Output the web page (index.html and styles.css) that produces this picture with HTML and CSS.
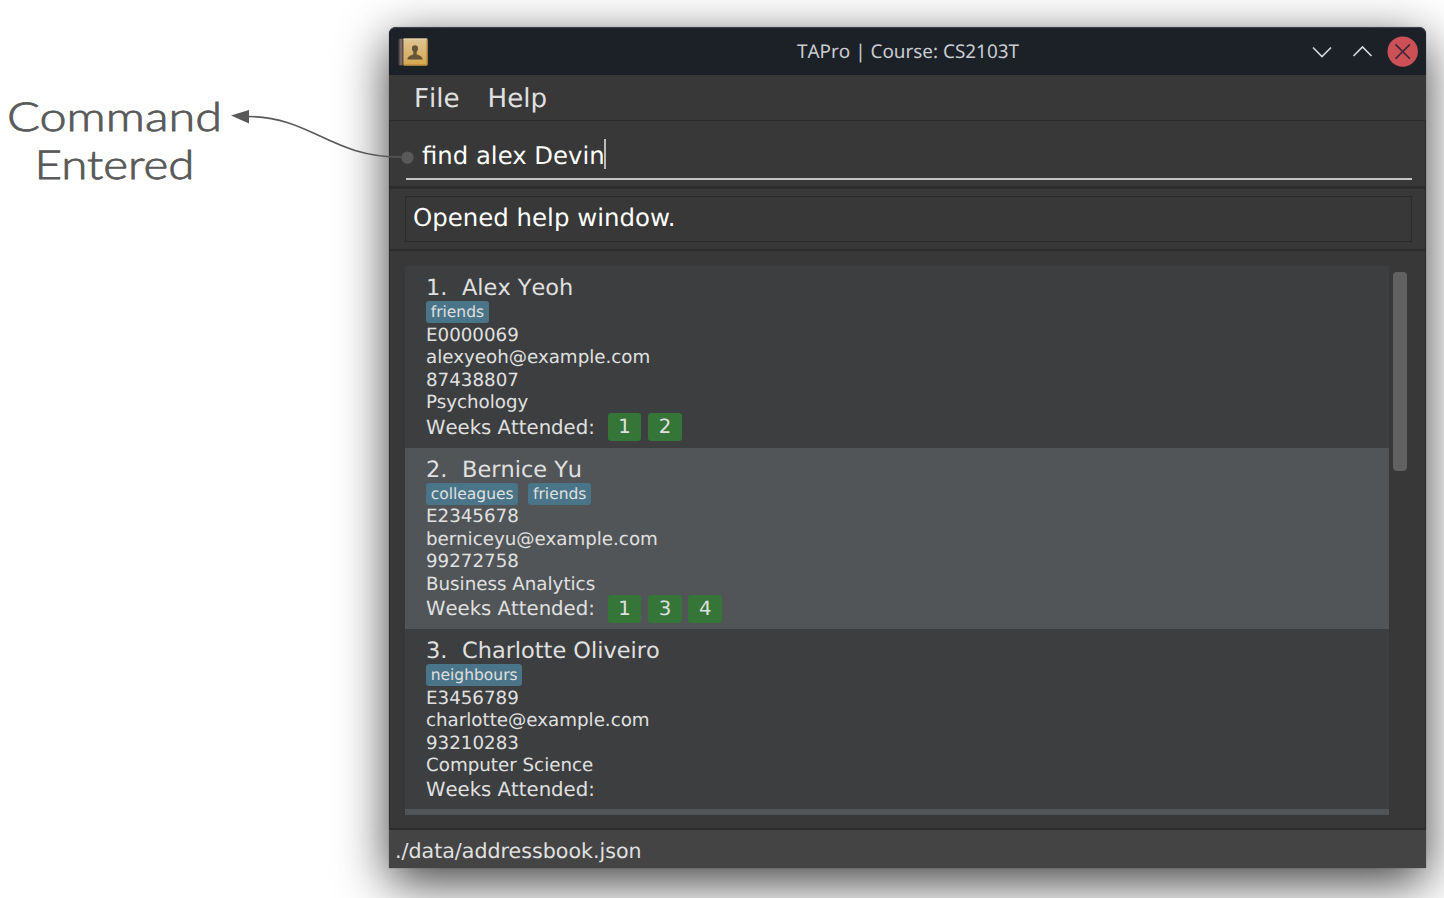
FILE: index.html
```html
<!DOCTYPE html>
<html lang="en">
<head>
<meta charset="utf-8">
<title>TAPro</title>
<link rel="stylesheet" href="styles.css">
</head>
<body>
<main class="stage">
  <svg class="note" width="389" height="110" viewBox="0 90 389 110">
    <text x="7" y="131" textLength="215" lengthAdjust="spacingAndGlyphs">Command</text>
    <text x="34.500" y="179" textLength="160" lengthAdjust="spacingAndGlyphs">Entered</text>
  </svg>
  <section class="window">
    <header class="titlebar">
      <svg class="app-icon" width="30" height="28" viewBox="0 0 30 28">
        <defs><linearGradient id="cover" x1="0" y1="0" x2="0" y2="1"><stop offset="0" stop-color="#dcc594"/><stop offset="1" stop-color="#d5a64c"/></linearGradient></defs>
        <rect x=".5" y=".5" width="29" height="27" rx="1.5" fill="#5c4b48"/>
        <rect x="2" y="1" width="2" height="26" fill="#786765"/>
        <rect x="5.500" y=".5" width="24" height="27" rx="1" fill="url(#cover)"/>
        <path d="M5.500 1.200H29" stroke="#e9d7ae"/><path d="M29 1v26H6" fill="none" stroke="#b18432"/>
        <path d="M17 7.200c-2.200 0-3.200 1.500-3.100 3.400.1 1.600.7 2.500 1.500 3.400v2.100c-.3 1.300-5.700 1.200-6 5.300h15.200c-.3-4.100-5.700-4-6-5.300V14c.8-.9 1.400-1.800 1.500-3.400.1-1.900-.9-3.400-3.100-3.400z" fill="#65533a"/>
      </svg>
      <h1 class="title">TAPro | Course: CS2103T</h1>
      <svg class="controls" width="110" height="34" viewBox="1310 34 110 34" fill="none">
        <path d="M1313 46.500l9 9 9-9M1353.500 55l9-9 9 9" stroke="#d5d8dc" stroke-width="1.600"/>
        <circle cx="1402.700" cy="50.600" r="15.200" fill="#cb5057"/>
        <path d="M1395.500 43.400l14.400 14.400M1409.900 43.400l-14.400 14.400" stroke="#3b2731" stroke-width="1.600"/>
      </svg>
    </header>
    <nav class="menubar"><span>File</span><span>Help</span></nav>
    <div class="command"><div class="command-field">find alex Devin<i class="caret"></i></div></div>
    <div class="result"><div class="result-box">Opened help window.</div></div>
    <div class="list-pane">
      <div class="list">
        <article class="person">
          <h2><span class="num">1.</span>Alex Yeoh</h2>
          <div class="tags"><span>friends</span></div>
          <p>E0000069</p><p>alexyeoh@example.com</p><p>87438807</p><p>Psychology</p>
          <div class="weeks">Weeks Attended:<b>1</b><b>2</b></div>
        </article>
        <article class="person alt">
          <h2><span class="num">2.</span>Bernice Yu</h2>
          <div class="tags"><span>colleagues</span><span>friends</span></div>
          <p>E2345678</p><p>berniceyu@example.com</p><p>99272758</p><p>Business Analytics</p>
          <div class="weeks">Weeks Attended:<b>1</b><b>3</b><b>4</b></div>
        </article>
        <article class="person short">
          <h2><span class="num">3.</span>Charlotte Oliveiro</h2>
          <div class="tags"><span>neighbours</span></div>
          <p>E3456789</p><p>charlotte@example.com</p><p>93210283</p><p>Computer Science</p>
          <div class="weeks">Weeks Attended:</div>
        </article>
        <article class="person alt"></article>
      </div>
      <div class="scrollbar"><div class="thumb"></div></div>
    </div>
    <footer class="status">./data/addressbook.json</footer>
  </section>
  <svg class="arrow" width="190" height="60" viewBox="225 105 190 60">
    <path d="M248 116.500C312 117 330 157 401 157" fill="none" stroke="#595959" stroke-width="1.600"/>
    <path d="M231 115.600l18-5.600v13.400z" fill="#595959"/>
    <circle cx="407.500" cy="157.700" r="6.200" fill="#595959"/>
  </svg>
</main>
</body>
</html>
```

FILE: styles.css
```css
* { box-sizing: border-box; }
body {
  margin: 0;
  background: #fff;
  font-family: "DejaVu Sans", sans-serif;
  color: #e0e0e0;
  text-rendering: geometricPrecision;
}
h1, h2, p { margin: 0; font-weight: 400; }
.stage {
  position: relative;
  display: flex;
  align-items: flex-start;
  width: 1444px;
  height: 898px;
  overflow: hidden;
}
.note { flex: none; margin-top: 90px; }
.note text {
  font: 300 40px Lato, sans-serif;
  fill: #595959;
  stroke: #595959;
  stroke-width: .8px;
}
.arrow { position: absolute; left: 225px; top: 105px; }
.window {
  display: flex;
  flex-direction: column;
  flex: none;
  width: 1037px;
  height: 841px;
  margin-top: 27px;
  border-radius: 7px 7px 0 0;
  background: #383838;
  box-shadow: 0 14px 50px rgba(0, 0, 0, .76), 0 0 1px #555;
}
.titlebar {
  display: grid;
  grid-template-columns: 110px 1fr 110px;
  align-items: center;
  height: 48px;
  padding: 0 6px 0 9px;
  border-top: 1px solid #41464d;
  border-radius: 7px 7px 0 0;
  background: #1c2027;
}
.title {
  padding: 0 2px 2px 0;
  text-align: center;
  font: 18.9px/26px "Noto Sans", sans-serif;
  font-kerning: none;
  color: #c9ccd1;
}
.menubar {
  display: flex;
  gap: 28px;
  height: 45px;
  padding-left: 25px;
  font-size: 26.1px;
  font-kerning: none;
  line-height: 49px;
}
.command {
  height: 68px;
  padding: 9px 13px 0 16px;
  border: 1px solid #2c2c2c;
  border-bottom-width: 2px;
}
.command-field {
  display: flex;
  align-items: center;
  height: 50px;
  padding: 3px 0 0 16px;
  border-bottom: 2px solid #c5c5c5;
  font-size: 24.35px;
  color: #fff;
}
.caret { width: 2px; height: 30px; margin: -4px 0 0 -1px; background: #bbb; }
.result {
  height: 63px;
  padding: 7px 13px 0 15px;
  border: solid #2c2c2c;
  border-width: 1px 1px 2px;
}
.result-box {
  height: 46px;
  padding-left: 7px;
  border: 1px solid #2b2b2b;
  font-size: 24.45px;
  line-height: 42px;
  color: #fff;
}
.list-pane {
  display: flex;
  gap: 4px;
  height: 579px;
  padding: 15px 18px 12px 15px;
  border: 1px solid #2c2c2c;
  border-top: 0;
  border-bottom-width: 2px;
}
.list { width: 984px; height: 549px; overflow: hidden; }
.person {
  height: 181.5px;
  padding: 8px 0 0 21px;
  background: #3c3e3f;
}
.person.short { height: 179.5px; }
.person.alt { background: #515557; }
.person h2 { padding-top: 1px; font-size: 22.45px; line-height: 26px; font-kerning: none; }
.num { display: inline-block; width: 36px; }
.tags { display: flex; gap: 10px; height: 23.8px; font-size: 15.5px; line-height: 22px; }
.tags span { height: 22px; padding: 0 4.7px; border-radius: 3px; background: #4a7488; }
.person p { font-size: 18.25px; line-height: 22.5px; }
.weeks { display: flex; align-items: center; height: 25px; font-size: 19.7px; font-kerning: none; }
.short .weeks { height: 24px; }
.weeks b {
  width: 33.5px;
  height: 28px;
  margin-left: 6.8px;
  border-radius: 3px;
  background: #357538;
  font-weight: 400;
  line-height: 28px;
  text-align: center;
}
.weeks b:first-of-type { margin-left: 13px; }
.scrollbar { width: 14px; padding-top: 6px; }
.thumb { height: 199px; border-radius: 4px; background: #616161; }
.status {
  height: 38px;
  padding-left: 6px;
  background: #444;
  font-size: 20.6px;
  line-height: 43px;
}
```
